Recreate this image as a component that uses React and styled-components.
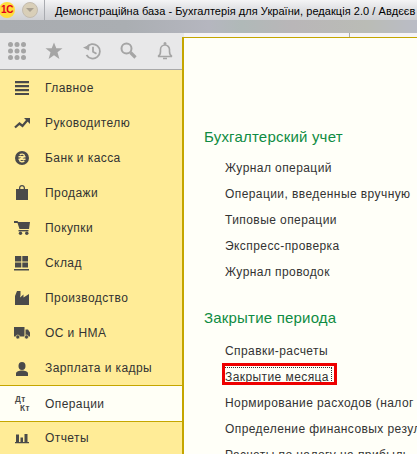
import React from 'react';
import styled, { createGlobalStyle } from 'styled-components';

const Global = createGlobalStyle`
  html, body { margin: 0; padding: 0; background: #fffff8; }
  body { width: 417px; height: 454px; overflow: hidden; font-family: "Liberation Sans", Arial, sans-serif; }
`;
const Page = styled.div`
  width: 417px; height: 454px; display: flex; flex-direction: column; overflow: hidden;
`;
const TitleBar = styled.header`
  height: 20px; flex: none; display: flex; align-items: center; overflow: hidden;
  background: linear-gradient(#f4f4f5, #dcdde0 55%, #cfd0d4);
`;
const Logo = styled.div`
  width: 16px; height: 16px; margin-left: -1px; flex: none; border-radius: 50%;
  background: #ffdc3c; color: #e2001a; font: bold 10px/16px "Liberation Sans", sans-serif;
  text-align: center; letter-spacing: -0.5px;
`;
const RoundBtn = styled.div`
  width: 16px; height: 16px; margin-left: 7px; flex: none; border-radius: 50%; box-sizing: border-box;
  background: #d9cfb8; border: 1px solid #c4bcae; display: flex; align-items: center; justify-content: center;
`;
const Sep = styled.div`
  width: 1px; height: 20px; margin: 0 10px 0 6px; flex: none; background: #a9abb0;
`;
const Title = styled.div`
  white-space: nowrap; font-family: "Liberation Sans", sans-serif; font-size: 11px; letter-spacing: 0.05px; color: #000; padding-top: 2px;
`;
const Strip = styled.div`
  height: 13px; flex: none;
  background: linear-gradient(90deg, #a9acb0, #aaaeb2 30%, #b5b6bf 50%, #b0b9b8 58%, #b9b6b8 70%, #babcb6 88%, #babcc6);
`;
const Main = styled.div`
  flex: 1; display: flex; min-height: 0;
`;
const Side = styled.nav`
  width: 184px; flex: none; display: flex; flex-direction: column;
`;
const Tools = styled.div`
  height: 36px; flex: none; width: 183px; background: #e8e8e9; border-bottom: 1px solid #a9a9a9;
  display: flex; align-items: center; padding-left: 7px; box-sizing: content-box; margin-right: -7px;
`;
const Tool = styled.div`
  width: 37.25px; flex: none; display: flex; padding-left: 1px; box-sizing: border-box;
`;
const Menu = styled.div`
  flex: 1; background: #ffec97; border-right: 2px solid #c5a600; display: flex; flex-direction: column;
`;
const Item = styled.div`
  height: 35px; flex: none; box-sizing: border-box; display: flex; align-items: center; padding: 1px 0 0 14px;
  gap: 15px; font-size: 12px; letter-spacing: 0.42px; color: #333;
  ${p => p.$active && `
    position: relative; z-index: 1; background: #fffff6; height: 37px; padding-top: 0;
    border-top: 1px solid #c5a600; border-bottom: 1px solid #c5a600; margin-bottom: -2px;
  `}
`;
const IconWrap = styled.span`
  width: 16px; height: 16px; flex: none; display: block; svg { display: block; }
`;
const Content = styled.main`
  flex: 1; display: flex; flex-direction: column; min-width: 0; background: #f6f4f6; position: relative;
`;
const ContentTop = styled.div`
  height: 4px; flex: none; position: relative;
  &::after { content: ""; position: absolute; left: 165px; top: 0; width: 1px; height: 4px; background: #a9a9a9; }
`;
const Panel = styled.div`
  flex: 1; background: #fffff8; border-top: 1px solid #c5a600; padding: 90px 0 0 20px; overflow: hidden;
  margin-left: -2px; border-left: 2px solid #c5a600; box-sizing: border-box; position: relative;
`;
const Heading = styled.h2`
  margin: 0; font-weight: normal; font-size: 15px; line-height: 18px; letter-spacing: 0.2px; color: #0f8c43;
`;
const Links = styled.ul`
  list-style: none; margin: ${p => p.$top}px 0 24px; padding: 0 0 0 21px;
`;
const Link = styled.li`
  height: 26px; line-height: 26px; font-size: 12px; letter-spacing: 0.42px; color: #333; white-space: nowrap;
`;
const Marked = styled.span`
  position: relative; display: inline-block; line-height: 16px;
  &::before { content: ""; position: absolute; left: -1px; right: -3px; top: -2px; bottom: 2px; border: 1px dotted #333; }
  &::after { content: ""; position: absolute; left: -3px; right: -8px; top: -6px; bottom: 0; border: 3px solid #ee0000; }
`;

const C = '#4a4a4a';
const Y = '#ffec97';
const icons = {
  home: <path fill={C} d="M1 1h14v2.300H1zM1 5h14v2.300H1zM1 9h14v2.300H1zM1 13h14v2H1z" />,
  chart: <g><path fill="none" stroke={C} strokeWidth="2.300" d="M1 12.500l4.500-4 3 2.500 5-6" /><path fill={C} d="M10 3h6v6z" /></g>,
  bank: <g><circle cx="8" cy="8" r="7" fill={C} /><path fill="none" stroke={Y} strokeWidth="1.400" d="M4.500 6.800h7M4.500 9.200h7M5.800 5.200c1-1.500 4.500-1.500 4.500.6 0 2.400-4.600 2-4.600 4.400 0 2 3.500 2 4.600.6" /></g>,
  bag: <path fill={C} fillRule="evenodd" d="M2 4h3V3c0-1.800 1.300-3 3-3s3 1.200 3 3v1h3v11H2zM6.300 4h3.400V3c0-1-.7-1.700-1.700-1.700S6.300 2 6.300 3z" />,
  cart: <g fill={C}><path d="M0 1h3.500l.8 1H16l-1 7H5.500L3.500 3H0z" /><rect x="4.500" y="10" width="10" height="1.400" /><circle cx="6.500" cy="13.300" r="1.700" /><circle cx="12.800" cy="13.300" r="1.700" /></g>,
  stock: <path fill={C} d="M1 1h6.300v5.500H1zM8.300 1H14v5.500H8.300zM1 7.500h6.300V12.500H1zM8.300 7.500H14V12.500H8.300zM0 14h15v1.400H0z" />,
  factory: <path fill={C} d="M1 15V6L3 1h3.500v4L6 7.500l3.500-3v3L15 4v11z" />,
  truck: <g fill={C}><path d="M0 2h10.500v9.500H0zM11.500 4.500h2.500l2 3v4h-4.500z" /><circle cx="3.800" cy="12" r="2" stroke={Y} strokeWidth=".6" /><circle cx="12.500" cy="12" r="2" stroke={Y} strokeWidth=".6" /></g>,
  user: <g fill={C}><ellipse cx="8" cy="6" rx="3.500" ry="4" /><path d="M2 16v-2.500c0-2 3-3 6-3s6 1 6 3V16z" /></g>,
  report: <path fill={C} d="M2 4.500h3V12H2zM6.500 7.500h2.500V12H6.500zM10.500 4h3v8h-3zM1 12h14v1.300H1z" />,
};
const Ic = ({ n }) => <IconWrap><svg width="16" height="16" viewBox="0 0 16 16">{icons[n]}</svg></IconWrap>;
const DtKt = () => (
  <IconWrap><svg width="16" height="16" viewBox="0 0 16 16">
    <text x="1" y="5.800" fontSize="8.200" fontWeight="bold" fontFamily="Liberation Sans" fill={C}>Дт</text>
    <text x="6" y="15.200" fontSize="8.200" fontWeight="bold" fontFamily="Liberation Sans" fill={C}>Кт</text>
  </svg></IconWrap>
);

const G = '#a5a5a5';
const menu = [
  ['home', 'Главное'], ['chart', 'Руководителю'], ['bank', 'Банк и касса'], ['bag', 'Продажи'],
  ['cart', 'Покупки'], ['stock', 'Склад'], ['factory', 'Производство'], ['truck', 'ОС и НМА'],
  ['user', 'Зарплата и кадры'], ['dtkt', 'Операции'], ['report', 'Отчеты'],
];

export default function App() {
  return (
    <Page>
      <Global />
      <TitleBar>
        <Logo>1С</Logo>
        <RoundBtn><svg width="10" height="6" viewBox="0 0 10 6"><path d="M1 1h8L5 5z" fill="#a89f90" /></svg></RoundBtn>
        <Sep />
        <Title>Демонстраційна база - Бухгалтерія для України, редакція 2.0 / Авдєєв</Title>
      </TitleBar>
      <Strip />
      <Main>
        <Side>
          <Tools>
            <Tool><svg width="18" height="18" viewBox="0 0 18 18" fill={G}>
              {[0,1,2].flatMap(r => [0,1,2].map(c => <circle key={r+'-'+c} cx={2.500+c*6.500} cy={2.500+r*6.500} r="2.500" />))}
            </svg></Tool>
            <Tool><svg width="18" height="18" viewBox="0 0 18 18"><path fill={G} d="M9 .5l2.300 5.800H17.500l-5 3.900 1.900 6.800L9 13.300 3.600 17l1.900-6.800-5-3.900h6.200z" /></svg></Tool>
            <Tool><svg width="18" height="18" viewBox="0 0 18 18" fill="none" stroke={G} strokeWidth="1.800"><path d="M3.600 5.500A7.200 7.200 0 1 1 3.500 13M10 4.800v5l3.500 2" /><path fill={G} stroke="none" d="M0 5.500l6 3 .5-5.500z" /></svg></Tool>
            <Tool><svg width="18" height="18" viewBox="0 0 18 18" fill="none" stroke={G}><circle cx="6.500" cy="6.500" r="5" strokeWidth="2" /><path d="M10.500 10.500l5 5" strokeWidth="3.200" /></svg></Tool>
            <Tool><svg width="18" height="18" viewBox="0 0 18 18" fill="none" stroke={G} strokeWidth="1.600"><path d="M1 14.500c2-1 2.500-2.500 2.500-5V7.500a4.500 4.500 0 0 1 9 0v2c0 2.500.5 4 2.500 5zM6 16.500h4" /><circle cx="8" cy="1.500" r=".7" /></svg></Tool>
          </Tools>
          <Menu>
            {menu.map(([n, t]) => (
              <Item key={n} $active={n === 'dtkt'}>
                {n === 'dtkt' ? <DtKt /> : <Ic n={n} />}
                <span>{t}</span>
              </Item>
            ))}
          </Menu>
        </Side>
        <Content>
          <ContentTop />
          <Panel>
            <Heading>Бухгалтерский учет</Heading>
            <Links $top={9}>
              <Link>Журнал операций</Link>
              <Link>Операции, введенные вручную</Link>
              <Link>Типовые операции</Link>
              <Link>Экспресс-проверка</Link>
              <Link>Журнал проводок</Link>
            </Links>
            <Heading>Закрытие периода</Heading>
            <Links $top={11}>
              <Link>Справки-расчеты</Link>
              <Link><Marked>Закрытие месяца</Marked></Link>
              <Link>Нормирование расходов (налог на прибыль)</Link>
              <Link>Определение финансовых результатов</Link>
              <Link>Расчеты по налогу на прибыль</Link>
            </Links>
          </Panel>
        </Content>
      </Main>
    </Page>
  );
}
